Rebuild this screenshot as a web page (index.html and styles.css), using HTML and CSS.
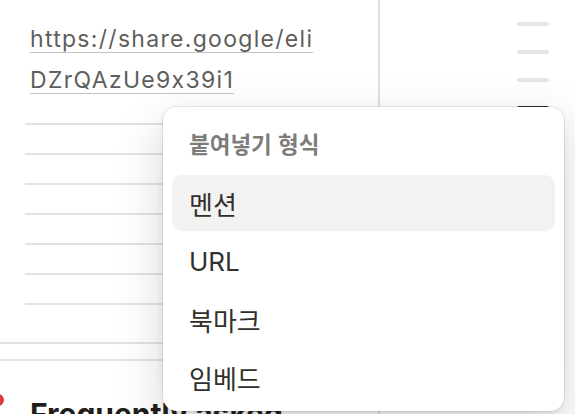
FILE: index.html
```html
<!DOCTYPE html>
<html lang="ko">
<head>
<meta charset="utf-8">
<title>붙여넣기 형식</title>
<link rel="stylesheet" href="styles.css">
</head>
<body>
<div class="page">
  <div class="main">
    <p class="link-block"><a class="link" href="#">https://share.google/eli<br>DZrQAzUe9x39i1</a></p>
    <div class="rules">
      <div class="rule"></div>
      <div class="rule"></div>
      <div class="rule"></div>
      <div class="rule"></div>
      <div class="rule"></div>
      <div class="rule"></div>
      <div class="rule"></div>
    </div>
    <div class="wide-rules">
      <div class="wide-rule"></div>
      <div class="wide-rule"></div>
    </div>
    <h2 class="heading"><span class="dot"></span><span>Frequently asked</span></h2>
  </div>
  <div class="divider"></div>
  <aside class="toc">
    <div class="toc-line"></div>
    <div class="toc-line"></div>
    <div class="toc-line"></div>
    <div class="toc-line active"></div>
  </aside>
</div>

<div class="menu">
  <div class="menu-header">붙여넣기 형식</div>
  <div class="menu-item selected">멘션</div>
  <div class="menu-item">URL</div>
  <div class="menu-item">북마크</div>
  <div class="menu-item">임베드</div>
</div>
</body>
</html>
```
FILE: styles.css
```css
html, body {
  margin: 0;
  padding: 0;
  background: #ffffff;
  overflow: hidden;
}
body {
  width: 575px;
  height: 414px;
  position: relative;
  font-family: Inter, "Noto Sans CJK KR", sans-serif;
  font-feature-settings: "calt" 0;
}
.page {
  display: grid;
  grid-template-columns: 378px 2px 1fr;
  height: 414px;
}
.main {
  display: flex;
  flex-direction: column;
  min-width: 0;
}
.link-block {
  margin: 0;
  padding: 19px 0 0 30px;
  font-size: 23px;
  line-height: 41px;
  letter-spacing: 1.3px;
}
.link {
  color: #5f5e5b;
  text-decoration: underline;
  text-decoration-color: #c4c4c2;
  text-decoration-thickness: 1px;
  text-underline-offset: 5px;
}
.rules {
  display: flex;
  flex-direction: column;
  gap: 28px;
  margin-top: 22px;
  padding-left: 25px;
}
.rule {
  height: 2px;
  background: #e3e3e2;
}
.wide-rules {
  display: flex;
  flex-direction: column;
  gap: 15px;
  margin-top: 37px;
}
.wide-rule {
  height: 2px;
  background: #e3e3e2;
}
.heading {
  display: flex;
  align-items: center;
  gap: 26px;
  margin: 33px 0 0 -8px;
  font-size: 30px;
  line-height: 40px;
  font-weight: 700;
  color: #1f1e1c;
  white-space: nowrap;
}
.dot {
  width: 12px;
  height: 12px;
  border-radius: 50%;
  background: #e0393e;
  flex: none;
  margin-top: -28px;
}
.divider {
  background: #e1e1e0;
}
.toc {
  display: flex;
  flex-direction: column;
  align-items: flex-end;
  gap: 24px;
  padding: 22px 26px 0 0;
}
.toc-line {
  width: 32px;
  height: 4px;
  border-radius: 2px;
  background: #e6e6e5;
}
.toc-line.active {
  background: #2f2e2b;
}
.menu {
  position: absolute;
  left: 163px;
  top: 107px;
  width: 401px;
  height: 304px;
  box-sizing: border-box;
  padding: 6px 9px;
  background: #ffffff;
  border-radius: 14px;
  box-shadow: 0 0 0 1px rgba(15, 15, 15, 0.08),
              0 5px 10px rgba(15, 15, 15, 0.06),
              0 16px 48px rgba(15, 15, 15, 0.17);
  display: flex;
  flex-direction: column;
  gap: 2px;
  font-family: Inter, "Noto Sans CJK KR", sans-serif;
}
.menu-header {
  height: 60px;
  display: flex;
  align-items: center;
  padding-left: 17px;
  font-family: "Noto Sans CJK KR", sans-serif;
  font-size: 22.5px;
  font-weight: 600;
  color: #7d7c78;
}
.menu-item {
  height: 56px;
  display: flex;
  align-items: center;
  padding-left: 17px;
  border-radius: 10px;
  font-size: 26px;
  color: #32302c;
}
.menu-item.selected {
  background: #f2f2f1;
}
```
